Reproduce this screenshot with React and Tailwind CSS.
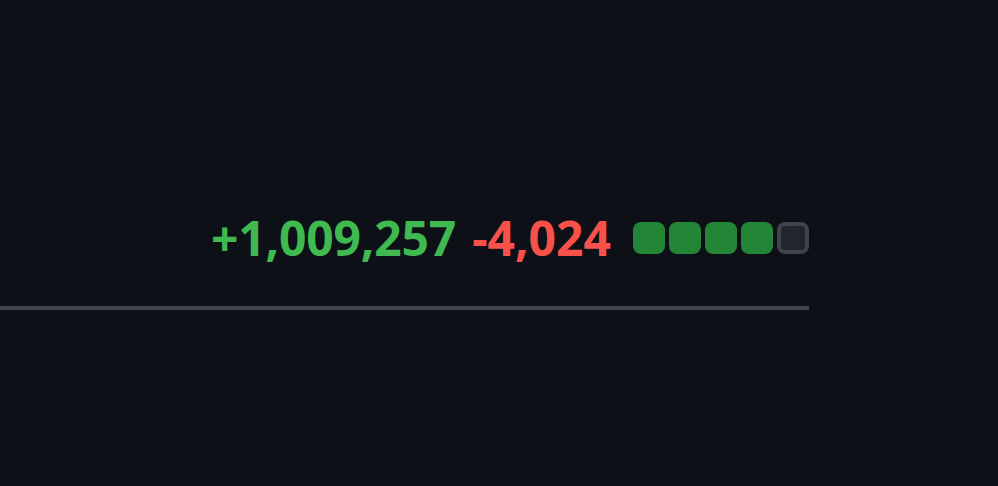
export default function App() {
  const blocks = ["bg-[#238636]", "bg-[#238636]", "bg-[#238636]", "bg-[#238636]"];

  return (
    <div className="min-h-[486px] w-full bg-[#0d1117] font-['Noto_Sans',sans-serif]">
      <div className="w-[809px] pt-[208px] pb-[38px] border-b-[4px] border-[#3d444d]">
        <div className="flex items-center justify-end h-[60px] leading-none">
          <span className="text-[48px] font-bold tracking-[-0.2px] text-[#3fb950]">+1,009,257</span>
          <span className="ml-4 text-[48px] font-bold text-[#f85149]">-4,024</span>
          <span className="ml-[22px] flex gap-1">
            {blocks.map((c, i) => (
              <span key={i} className={`block w-8 h-8 rounded-[8px] ${c}`} />
            ))}
            <span className="block w-8 h-8 rounded-[8px] bg-[#21262d] border-[4px] border-[#3d444d]" />
          </span>
        </div>
      </div>
    </div>
  );
}
